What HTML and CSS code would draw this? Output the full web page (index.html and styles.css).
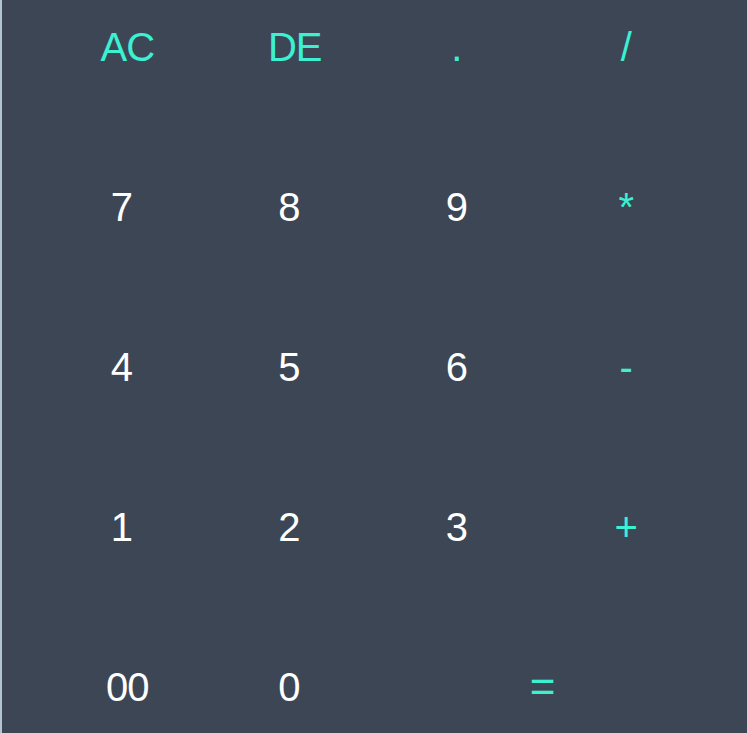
FILE: index.html
```html
<!DOCTYPE html>
<html lang="en">
<head>
<meta charset="utf-8">
<title>Calculator keypad</title>
<link rel="stylesheet" href="styles.css">
</head>
<body>
<div class="app">
  <div class="edge"></div>
  <div class="keypad">
    <button class="key op pair">AC</button>
    <button class="key op pair">DE</button>
    <button class="key op">.</button>
    <button class="key op last">/</button>
    <button class="key">7</button>
    <button class="key">8</button>
    <button class="key">9</button>
    <button class="key op last">*</button>
    <button class="key">4</button>
    <button class="key">5</button>
    <button class="key">6</button>
    <button class="key op last">-</button>
    <button class="key">1</button>
    <button class="key">2</button>
    <button class="key">3</button>
    <button class="key op last">+</button>
    <button class="key pair">00</button>
    <button class="key">0</button>
    <button class="key op wide">=</button>
  </div>
</div>
</body>
</html>
```

FILE: styles.css
```css
html, body {
  margin: 0;
  padding: 0;
  height: 100%;
  background: #3c4655;
  overflow: hidden;
}

.app {
  display: flex;
  height: 100%;
}

.edge {
  width: 2px;
  flex: none;
  background: #b4c4d4;
}

.keypad {
  display: grid;
  grid-template-columns: repeat(4, 1fr);
  grid-auto-rows: 160px;
  width: 670px;
  margin-left: 36px;
  margin-top: -33px;
  align-self: flex-start;
}

.key {
  background: transparent;
  border: none;
  padding: 0;
  margin: 0;
  color: #ffffff;
  font-family: "Liberation Sans", Arial, sans-serif;
  font-size: 40px;
  line-height: 1;
  display: flex;
  align-items: center;
  justify-content: center;
}

.op {
  color: #3cf0d2;
}

.pair {
  padding-left: 11px;
  letter-spacing: -1px;
}

.last {
  padding-left: 4px;
}

.wide {
  grid-column: span 2;
  padding-left: 4px;
  font-size: 44px;
}
```
